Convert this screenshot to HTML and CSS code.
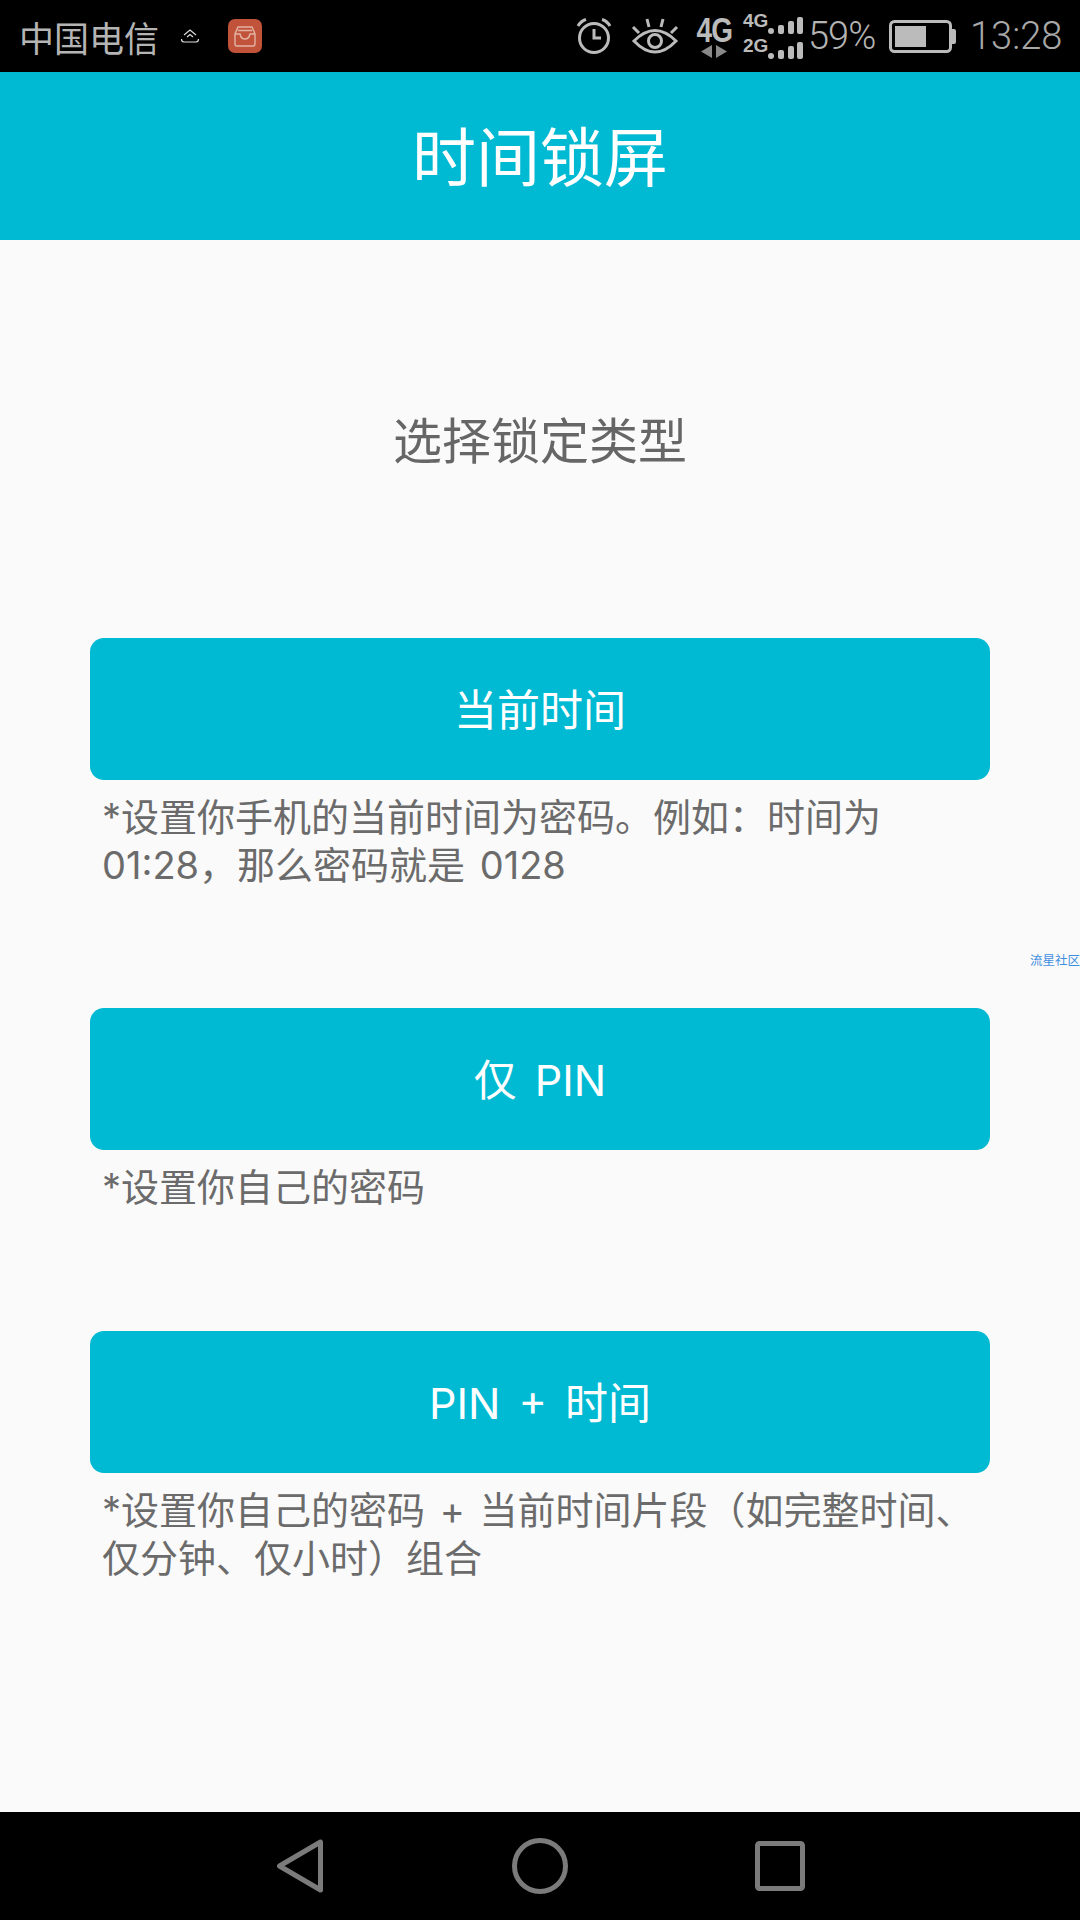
FILE: index.html

```html
<!DOCTYPE html>
<html lang="zh-CN">
<head>
  <meta charset="UTF-8" />
  <title>时间锁屏</title>
  <link rel="stylesheet" href="styles.css">
</head>
<body>
  <div class="status-bar">
    <div class="status-left">
      <span class="carrier">中国电信</span>
      <svg class="icon-up" width="20" height="18" viewBox="0 0 20 18">
        <path d="M4 8 L10 3 L16 8 M7 10 L10 7.500 L13 10 M1.500 12 Q1.500 15 4 15 L16 15 Q18.500 15 18.500 12" fill="none" stroke="#ddd" stroke-width="1.200"/>
      </svg>
      <svg class="icon-app" width="34" height="34" viewBox="0 0 34 34">
        <rect width="34" height="34" rx="7" fill="#c0533a"/>
        <path d="M10 8 H24 L27 15 V25 Q27 27 25 27 H9 Q7 27 7 25 V15 Z M7 15 H12 Q13 20 17 20 Q21 20 22 15 H27 M10 11.500 H24" fill="none" stroke="#e3b3a5" stroke-width="1.400"/>
      </svg>
    </div>
    <div class="status-right">
      <svg class="icon-alarm" width="38" height="38" viewBox="0 0 38 38">
        <circle cx="19" cy="21" r="14.500" fill="none" stroke="#bbb" stroke-width="3"/>
        <path d="M19 12 V21 H26" fill="none" stroke="#bbb" stroke-width="3"/>
        <path d="M3 9 Q6 4 11 2.500 M27 2.500 Q32 4 35 9" fill="none" stroke="#bbb" stroke-width="3"/>
      </svg>
      <svg class="icon-eye" width="48" height="38" viewBox="0 0 48 38">
        <path d="M3 24 Q24 3 45 24 Q24 46 3 24 Z" fill="none" stroke="#bbb" stroke-width="3"/>
        <circle cx="24" cy="24" r="6.500" fill="none" stroke="#bbb" stroke-width="3"/>
        <path d="M2 10 L8 16 M16 2 L18 10 M32 2 L30 10 M46 10 L40 16" stroke="#bbb" stroke-width="3"/>
      </svg>
      <div class="net">
        <span class="net-label">4G</span>
        <svg width="26" height="13" viewBox="0 0 26 13">
          <path d="M11 0 V13 L0 6.500 Z M15 0 V13 L26 6.500 Z" fill="#888"/>
        </svg>
      </div>
      <div class="sims">
        <div class="sim">
          <span class="sim-label">4G</span>
          <svg width="35" height="17" viewBox="0 0 35 17">
            <rect x="0" y="11" width="6" height="6" rx="3" fill="#bbb"/>
            <rect x="10" y="8" width="6" height="9" rx="2" fill="#bbb"/>
            <rect x="20" y="4" width="6" height="13" rx="2" fill="#bbb"/>
            <rect x="29" y="0" width="6" height="17" rx="2" fill="#bbb"/>
          </svg>
        </div>
        <div class="sim">
          <span class="sim-label">2G</span>
          <svg width="35" height="17" viewBox="0 0 35 17">
            <rect x="0" y="11" width="6" height="6" rx="3" fill="#bbb"/>
            <rect x="10" y="8" width="6" height="9" rx="2" fill="#bbb"/>
            <rect x="20" y="4" width="6" height="13" rx="2" fill="#bbb"/>
            <rect x="29" y="0" width="6" height="17" rx="2" fill="#bbb"/>
          </svg>
        </div>
      </div>
      <span class="status-text pct">59%</span>
      <svg class="icon-battery" width="67" height="33" viewBox="0 0 67 33">
        <rect x="1.500" y="1.500" width="60" height="30" rx="4" fill="none" stroke="#bbb" stroke-width="3"/>
        <rect x="6" y="6" width="31" height="21" fill="#bbb"/>
        <path d="M63 9 H65 Q67 9 67 11 V22 Q67 24 65 24 H63 Z" fill="#bbb"/>
      </svg>
      <span class="status-text clock">13:28</span>
    </div>
  </div>

  <header class="app-header">时间锁屏</header>

  <main class="content">
    <h2 class="subtitle">选择锁定类型</h2>

    <section class="option option-time">
      <button class="option-btn">当前时间</button>
      <p class="note">*设置你手机的当前时间为密码。例如：时间为<br>01:28，那么密码就是 0128</p>
    </section>

    <section class="option option-pin">
      <button class="option-btn">仅 PIN</button>
      <p class="note">*设置你自己的密码</p>
    </section>

    <section class="option option-both">
      <button class="option-btn">PIN + 时间</button>
      <p class="note">*设置你自己的密码 + 当前时间片段（如完整时间、<br>仅分钟、仅小时）组合</p>
    </section>

    <span class="watermark">流星社区</span>
  </main>

  <nav class="nav-bar">
    <svg width="48" height="54" viewBox="0 0 48 54">
      <path d="M44.500 3 V51 L3.500 27 Z" fill="none" stroke="#7b7b7b" stroke-width="5" stroke-linejoin="round"/>
    </svg>
    <svg width="56" height="56" viewBox="0 0 56 56">
      <circle cx="28" cy="28" r="25.500" fill="none" stroke="#7b7b7b" stroke-width="5"/>
    </svg>
    <svg width="50" height="50" viewBox="0 0 50 50">
      <rect x="2.500" y="2.500" width="45" height="45" rx="2" fill="none" stroke="#7b7b7b" stroke-width="5" stroke-linejoin="round"/>
    </svg>
  </nav>
</body>
</html>
```

FILE: styles.css

```css
* {
  box-sizing: border-box;
}
body {
  margin: 0;
  width: 1080px;
  height: 1920px;
  display: flex;
  flex-direction: column;
  font-family: Inter, "Noto Sans CJK SC", sans-serif;
  font-weight: 400;
  background: #fafafa;
}
.status-bar {
  height: 72px;
  background: #000;
  display: flex;
  align-items: center;
  justify-content: space-between;
  padding: 0 18px 0 19px;
  color: #b4b4b4;
}
.status-left {
  display: flex;
  align-items: center;
}
.carrier {
  font-size: 35px;
  width: 140px;
}
.icon-up {
  margin: 0 0 0 21px;
}
.icon-app {
  margin-left: 28px;
}
.status-right {
  display: flex;
  align-items: center;
}
.icon-alarm {
  margin-right: 18px;
}
.icon-eye {
  margin-right: 16px;
}
.net {
  width: 38px;
  display: flex;
  flex-direction: column;
  align-items: center;
  margin-right: 10px;
}
.net-label {
  font-family: "Liberation Sans", sans-serif;
  font-weight: 700;
  font-size: 35px;
  line-height: 30px;
  letter-spacing: -1px;
  transform: scaleX(0.8);
  color: #bbb;
}
.sims {
  width: 60px;
  display: flex;
  flex-direction: column;
  gap: 5px;
  margin-right: 5px;
}
.sim {
  display: flex;
  align-items: flex-end;
  justify-content: space-between;
  height: 20px;
}
.sim-label {
  font-family: "Liberation Sans", sans-serif;
  font-weight: 700;
  font-size: 19px;
  line-height: 17px;
  color: #bbb;
  margin-bottom: 5px;
  width: 25px;
  white-space: nowrap;
}
.status-text {
  font-family: Roboto, sans-serif;
  font-weight: 300;
  font-size: 38px;
  line-height: 40px;
}
.pct {
  width: 69px;
  letter-spacing: -1px;
}
.icon-battery {
  margin: 0 14px 0 12px;
}
.clock {
  width: 92px;
  color: #a8a8a8;
}
.app-header {
  height: 168px;
  padding-bottom: 6px;
  background: #00bad3;
  color: #fff;
  font-size: 64px;
  display: flex;
  align-items: center;
  justify-content: center;
}
.content {
  flex: 1;
  position: relative;
  padding: 0 90px;
}
.subtitle {
  margin: 0;
  padding-top: 167px;
  height: 398px;
  font-size: 49px;
  line-height: 70px;
  font-weight: 400;
  color: #666;
  text-align: center;
}
.option-btn {
  display: block;
  width: 100%;
  height: 142px;
  padding: 0 0 5px;
  border: none;
  border-radius: 14px;
  background: #00bad3;
  color: #fff;
  font-family: inherit;
  font-weight: 400;
  font-size: 43px;
  word-spacing: 6px;
}
.note {
  margin: 13px 0 0;
  padding-left: 12px;
  font-size: 38px;
  line-height: 48px;
  color: #6b6b6b;
  white-space: nowrap;
  word-spacing: 4px;
}
.option-time {
  height: 370px;
}
.option-pin {
  height: 323px;
}
.watermark {
  position: absolute;
  right: 0;
  top: 714px;
  font-size: 12.500px;
  line-height: 14px;
  color: #3f8fe0;
}
.nav-bar {
  height: 108px;
  background: #000;
  display: flex;
  align-items: center;
  gap: 187.500px;
  padding-left: 276px;
}
```
